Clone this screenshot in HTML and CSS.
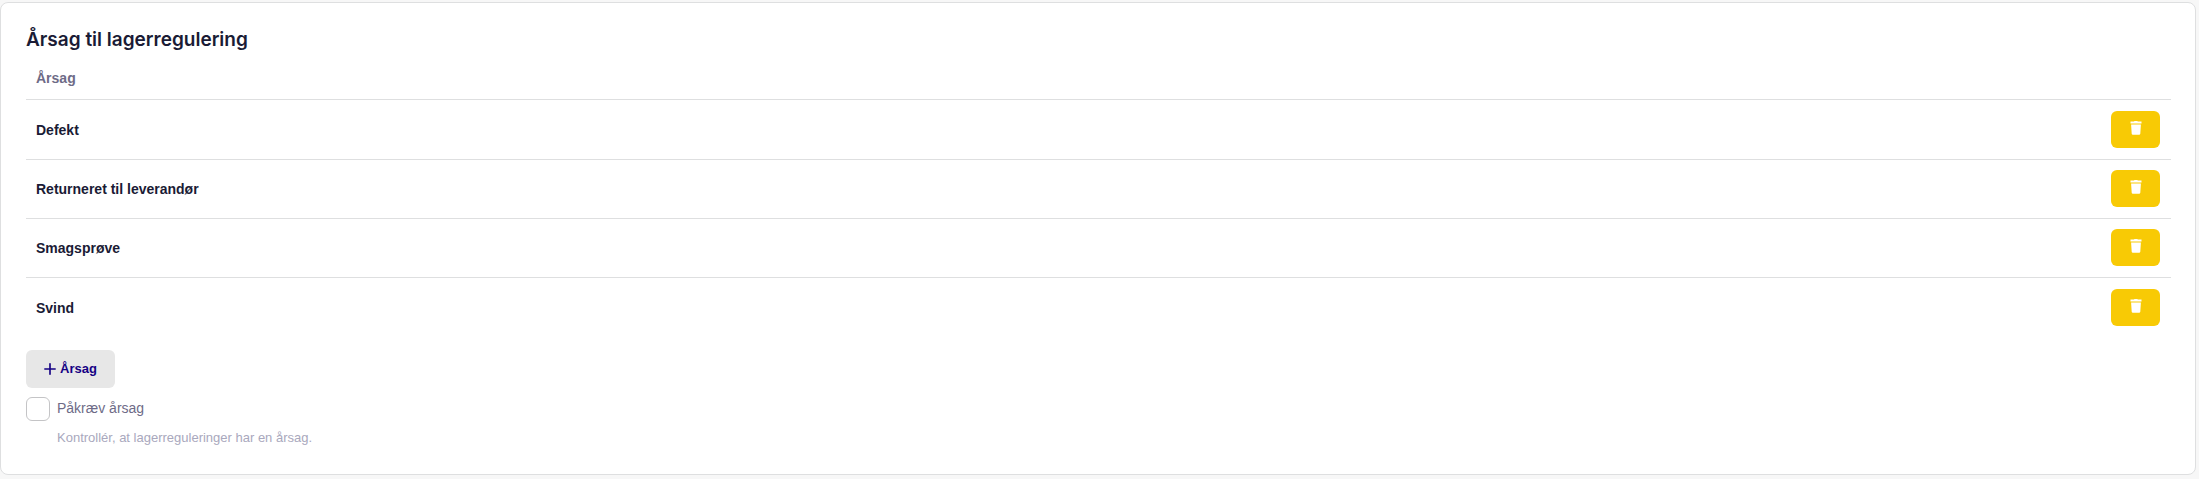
FILE: index.html
```html
<!DOCTYPE html>
<html lang="da">
<head>
<meta charset="utf-8">
<title>Årsag til lagerregulering</title>
<link rel="stylesheet" href="styles.css">
</head>
<body>
<svg class="sprite" aria-hidden="true">
  <symbol id="trash" viewBox="0 0 12 14">
    <path d="M4 .6C4 .2 4.600 0 6 0s2 .2 2 .6h3.500v2H.5v-2z"/>
    <path d="M1.100 3.500h9.800l-.6 9.200a1.200 1.200 0 0 1-1.200 1.100H2.900a1.200 1.200 0 0 1-1.200-1.100z"/>
  </symbol>
</svg>
<main class="card">
  <h1 class="title">Årsag til lagerregulering</h1>
  <table class="reasons">
    <thead>
      <tr><th scope="col">Årsag</th><th class="action"></th></tr>
    </thead>
    <tbody>
      <tr><td>Defekt</td><td class="action"><button class="delete" type="button" aria-label="Slet Defekt"><svg class="trash"><use href="#trash"/></svg></button></td></tr>
      <tr><td>Returneret til leverandør</td><td class="action"><button class="delete" type="button" aria-label="Slet Returneret til leverandør"><svg class="trash"><use href="#trash"/></svg></button></td></tr>
      <tr><td>Smagsprøve</td><td class="action"><button class="delete" type="button" aria-label="Slet Smagsprøve"><svg class="trash"><use href="#trash"/></svg></button></td></tr>
      <tr><td>Svind</td><td class="action"><button class="delete" type="button" aria-label="Slet Svind"><svg class="trash"><use href="#trash"/></svg></button></td></tr>
    </tbody>
  </table>
  <button class="add" type="button"><svg class="plus" viewBox="0 0 11 11" aria-hidden="true"><path d="M5.500 .8v9.400M.8 5.500h9.400"/></svg>Årsag</button>
  <div class="option">
    <input class="check" type="checkbox" id="require" aria-describedby="require-hint">
    <label class="label" for="require">Påkræv årsag</label>
    <p class="hint" id="require-hint">Kontrollér, at lagerreguleringer har en årsag.</p>
  </div>
</main>
</body>
</html>
```
FILE: styles.css
```css
* { box-sizing: border-box; }
body {
  margin: 0;
  padding: 2px 3px 4px 0;
  background: #f7f7f7;
  color: #1a1b35;
  font: 14px/20px "Liberation Sans", Arial, sans-serif;
}
.sprite { display: none; }
.card {
  padding: 25px 24px 26px 25px;
  background: #fff;
  border: 1px solid #dedfe0;
  border-radius: 8px;
}
.title {
  margin: 0;
  font: 600 19px/24px Inter, "Liberation Sans", sans-serif;
}
.reasons {
  width: 100%;
  border-collapse: separate;
  border-spacing: 0;
}
.reasons th,
.reasons td {
  padding: 10px 10px 11px;
  text-align: left;
  font-weight: 700;
  border-bottom: 1px solid #dedfe0;
}
.reasons th {
  height: 48px;
  padding: 12px 10px 7px;
  color: #6e6b87;
}
.reasons .action {
  width: 70px;
  padding-right: 11px;
}
.reasons tbody tr:first-child td,
.reasons tbody tr:last-child td { padding-top: 11px; }
.reasons tbody tr:last-child td { border-bottom: 0; }
.delete {
  display: flex;
  align-items: center;
  justify-content: center;
  width: 49px;
  height: 37px;
  padding: 0 0 3px;
  border: 0;
  border-radius: 6px;
  background: #f8ca05;
  color: #fff;
}
.trash {
  width: 12px;
  height: 14px;
  fill: currentColor;
}
.add {
  display: flex;
  align-items: center;
  justify-content: center;
  gap: 4px;
  height: 38px;
  margin-top: 13px;
  padding: 0 18px;
  border: 0;
  border-radius: 6px;
  background: #e7e7e7;
  color: #150184;
  font: 700 13px/20px "Liberation Sans", Arial, sans-serif;
}
.plus {
  width: 12px;
  height: 12px;
  fill: none;
  stroke: currentColor;
  stroke-width: 1.5;
  stroke-linecap: round;
}
.option {
  display: grid;
  grid-template-columns: 24px 1fr;
  align-items: center;
  column-gap: 7px;
  row-gap: 7px;
  margin-top: 9px;
}
.check {
  appearance: none;
  width: 24px;
  height: 24px;
  margin: 0;
  border: 1px solid #c4c4c6;
  border-radius: 6px;
  background: #fff;
}
.label {
  padding-bottom: 2px;
  color: #6e6b87;
}
.hint {
  grid-column: 2;
  margin: 0;
  color: #a9a8bd;
  font-size: 13px;
}
```
